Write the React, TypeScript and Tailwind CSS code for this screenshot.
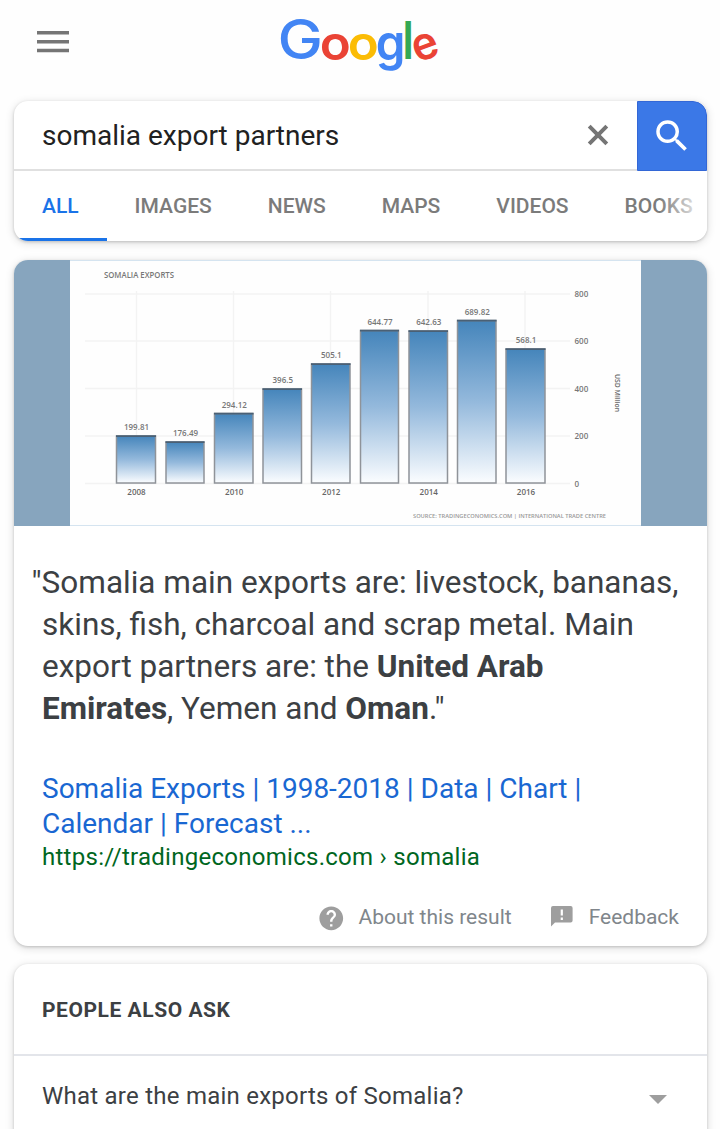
import type { ReactNode } from "react";
import { MdHelp, MdSearch } from "react-icons/md";

const tabs = ["ALL", "IMAGES", "NEWS", "MAPS", "VIDEOS", "BOOKS"];

const bars = [
  { x: 116, top: 436, w: 40, value: "199.81", year: "2008" },
  { x: 165.5, top: 442, w: 39, value: "176.49" },
  { x: 214, top: 413.5, w: 39.5, value: "294.12", year: "2010" },
  { x: 262.5, top: 389, w: 39.5, value: "396.5" },
  { x: 311, top: 364, w: 39.5, value: "505.1", year: "2012" },
  { x: 360, top: 330.5, w: 39, value: "644.77" },
  { x: 408.5, top: 331, w: 39.5, value: "642.63", year: "2014" },
  { x: 457, top: 320.5, w: 39.5, value: "689.82" },
  { x: 505.5, top: 349, w: 40, value: "568.1", year: "2016" },
];

const axis = [
  { y: 294, label: "800" },
  { y: 341, label: "600" },
  { y: 388.5, label: "400" },
  { y: 436, label: "200" },
  { y: 483.5, label: "0" },
];

function Logo() {
  return (
    <svg className="overflow-visible" width="160" height="56" viewBox="279 17 160 56" fontSize="100" fontWeight="600" fontFamily="Inter, sans-serif" aria-label="Google">
      <text transform="translate(277.5 59.3) scale(0.608 0.547)" fill="#4285f4" fontWeight="500">G</text>
      <text transform="translate(319.8 59.5) scale(0.51 0.478)" fill="#ea4335">o</text>
      <text transform="translate(347.8 59.5) scale(0.51 0.478)" fill="#fbbc05">o</text>
      <text transform="translate(375.8 60.2) scale(0.475 0.494)" fill="#4285f4">g</text>
      <text transform="translate(402.6 59) scale(0.43 0.52)" fill="#34a853">l</text>
      <text transform="translate(425.2 46.8) rotate(-20) scale(0.44 0.46) translate(-29.5 27)" fill="#ea4335">e</text>
    </svg>
  );
}

function Chart() {
  return (
    <div className="bg-[#87a5be] pr-[66.5px] pl-14">
      <div className="border-y border-[#d5e4f0] bg-[#fefefe]">
        <svg className="block" width="570" height="264" viewBox="70 261 570 264" fontFamily="'Open Sans', sans-serif" fontSize="8" fontWeight="600">
          <defs>
            <linearGradient id="bar" x1="0" y1="0" x2="0" y2="1">
              <stop offset="0" stopColor="#4585bb" />
              <stop offset="0.5" stopColor="#94b9dc" />
              <stop offset="1" stopColor="#fbfdff" />
            </linearGradient>
          </defs>
          <g stroke="#f3f3f3" strokeWidth="1.4">
            {axis.map((a) => (
              <path key={a.y} d={`M85 ${a.y}H570`} />
            ))}
            {[136.5, 233.5, 330.5, 428, 525].map((x) => (
              <path key={x} d={`M${x} 291V483`} />
            ))}
          </g>
          <text x="104" y="277.5" fill="#777" textLength="70" lengthAdjust="spacingAndGlyphs">SOMALIA EXPORTS</text>
          {bars.map((b) => (
            <g key={b.x}>
              <rect x={b.x + 0.5} y={b.top} width={b.w - 1} height={483 - b.top} fill="url(#bar)" stroke="#8f9399" strokeWidth="1.5" />
              <path d={`M${b.x} ${b.top + 0.2}h${b.w}`} stroke="#4a6075" strokeWidth="1.8" />
              <text x={b.x + b.w / 2 + 0.5} y={b.top - 5.8} textAnchor="middle" fill="#777">{b.value}</text>
              {b.year && (
                <text x={b.x + b.w / 2 + 0.5} y="494.5" textAnchor="middle" fill="#666">{b.year}</text>
              )}
            </g>
          ))}
          {axis.map((a) => (
            <text key={a.y} x="574.5" y={a.y + 3} fill="#777">{a.label}</text>
          ))}
          <text transform="translate(615 374) rotate(90)" fill="#666" fontSize="7" textLength="38" lengthAdjust="spacingAndGlyphs">USD Million</text>
          <text x="413" y="517.5" fill="#999" fontSize="6" textLength="193" lengthAdjust="spacingAndGlyphs">
            SOURCE: TRADINGECONOMICS.COM | INTERNATIONAL TRADE CENTRE
          </text>
        </svg>
      </div>
    </div>
  );
}

function FeedbackIcon() {
  return (
    <svg className="mt-[15px] ml-[39px]" width="22" height="21" viewBox="0 0 22 21">
      <path d="M2 0h17.6a2 2 0 0 1 2 2v12.6a2 2 0 0 1-2 2H4L0 20.6V2a2 2 0 0 1 2-2z" fill="#9e9e9e" />
      <path d="M9.7 3.4h2.2v6.2H9.7zM9.7 11.6h2.2v2.3H9.7z" fill="#fff" />
    </svg>
  );
}

function Card({ children, className = "" }: { children: ReactNode; className?: string }) {
  return (
    <section className={`rounded-[14px] bg-white shadow-[0_2px_10px_rgba(0,0,0,0.14),0_1px_3px_rgba(0,0,0,0.18)] ${className}`}>
      <div className="overflow-hidden rounded-[14px]">{children}</div>
    </section>
  );
}

export default function App() {
  return (
    <div className="h-[1129px] w-[720px] overflow-hidden bg-[#fefefe] pr-[13px] pl-[14px] font-[Roboto,sans-serif] text-[#3c4043]">
      <header className="grid h-[101px] grid-cols-3 items-start">
        <button className="mt-[31px] ml-[22.5px]" aria-label="Menu">
          <svg width="32" height="22" viewBox="0 0 32 22" fill="#757575">
            <path d="M0 0h32v3.4H0zM0 9h32v3.4H0zM0 17.8h32v3.4H0z" />
          </svg>
        </button>
        <div className="mt-[17px] flex justify-center pr-[3px]">
          <Logo />
        </div>
      </header>

      <Card>
        <div className="flex h-[70px]">
          <div className="flex grow items-center justify-between border-b-2 border-[#e0e0e0] px-7">
            <span className="pt-0.5 text-[28px] text-[#212121]">somalia export partners</span>
            <svg width="22" height="22" viewBox="0 0 22 22" stroke="#757575" strokeWidth="4">
              <path d="M2.2 2.2l17.6 17.6M19.8 2.2L2.2 19.8" />
            </svg>
          </div>
          <button className="flex w-[70px] items-center justify-center rounded-tr-[14px] border border-[#3367d6] bg-[#3b78e7]" aria-label="Search">
            <MdSearch className="size-[42px] text-white" />
          </button>
        </div>
        <div className="relative">
          <nav className="flex h-[70px] text-[21px] font-medium whitespace-nowrap text-[#7b7b7b]">
            {tabs.map((t, i) => (
              <a
                key={t}
                className={
                  i === 0
                    ? "border-b-[3.5px] border-[#1a73e8] px-7 leading-[70px] text-[#1a73e8]"
                    : "px-7 leading-[70px]"
                }
              >
                {t}
              </a>
            ))}
          </nav>
          <div className="absolute inset-y-0 right-0 w-12 bg-linear-to-r from-white/0 to-white" />
        </div>
      </Card>

      <Card className="mt-[19px]">
        <Chart />
        <div className="px-7 pt-9">
          <p className="-indent-[10.5px] text-[31.5px] leading-[42px] whitespace-nowrap">
            "Somalia main exports are: livestock, bananas,
            <br />
            skins, fish, charcoal and scrap metal. Main
            <br />
            export partners are: the <b>United Arab</b>
            <br />
            <b>Emirates</b>, Yemen and <b>Oman</b>."
          </p>
          <h3 className="mt-[41px] text-[28px] leading-[35px] text-[#1967d2]">
            Somalia Exports | 1998-2018 | Data | Chart |<br />
            Calendar | Forecast ...
          </h3>
          <cite className="mt-[2px] block text-2xl leading-7 tracking-[0.27px] text-[#006621] not-italic">
            https://tradingeconomics.com › somalia
          </cite>
          <div className="flex h-[75px] items-center justify-end text-[21px] text-[#80868b]">
            <MdHelp className="mt-[19px] mr-px size-[28.5px] text-[#9e9e9e]" />
            <span className="mt-[18px] ml-3">About this result</span>
            <FeedbackIcon />
            <span className="mt-[18px] ml-4">Feedback</span>
          </div>
        </div>
      </Card>

      <Card className="mt-[18px]">
        <h2 className="flex h-[92px] items-center border-b-2 border-[#e3e5ea] px-7 pt-[3px] text-[21px] font-bold tracking-[0.55px]">
          PEOPLE ALSO ASK
        </h2>
        <div className="flex h-[100px] items-start justify-between pt-[26px] pr-10 pl-7">
          <span className="text-2xl leading-7 tracking-[0.24px]">What are the main exports of Somalia?</span>
          <svg className="mt-[13px]" width="18" height="9" viewBox="0 0 18 9">
            <path d="M0 0h18L9 9z" fill="#9e9e9e" />
          </svg>
        </div>
      </Card>
    </div>
  );
}
